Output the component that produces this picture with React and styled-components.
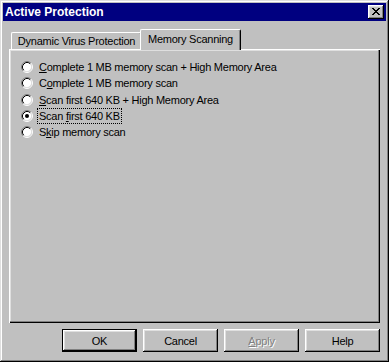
import React from "react";
import styled, { createGlobalStyle } from "styled-components";

const Global = createGlobalStyle`
  html, body { margin: 0; padding: 0; background: #c0c0c0; }
  body {
    font-family: "Liberation Sans", Arial, sans-serif;
    font-size: 11px;
    color: #000;
  }
`;

const bevelOut =
  "inset -1px -1px #000, inset 1px 1px #fff, inset -2px -2px #808080, inset 2px 2px #dfdfdf";

const Window = styled.div`
  box-sizing: border-box;
  width: 389px;
  height: 362px;
  padding: 3px;
  background: #c0c0c0;
  box-shadow: inset -1px -1px #000, inset 1px 1px #dfdfdf,
    inset -2px -2px #808080, inset 2px 2px #fff;
  display: flex;
  flex-direction: column;
`;

const TitleBar = styled.div`
  flex: none;
  height: 18px;
  background: #000080;
  color: #fff;
  display: flex;
  align-items: center;
  justify-content: space-between;
  padding: 0 2px;
`;

const Title = styled.span`
  font-weight: bold;
  font-size: 12px;
  line-height: 14px;
`;

const CloseButton = styled.div`
  box-sizing: border-box;
  width: 16px;
  height: 14px;
  background: #c0c0c0;
  box-shadow: ${bevelOut};
  display: flex;
  align-items: center;
  justify-content: center;
  padding: 0 1px 1px 0;
  svg { display: block; }
`;

const Body = styled.div`
  flex: 1;
  display: flex;
  flex-direction: column;
  padding: 8px 6px 7px;
  min-height: 0;
`;

const TabRow = styled.div`
  flex: none;
  height: 20px;
  display: flex;
  align-items: flex-end;
  padding-left: 2px;
`;

const Tab = styled.div`
  position: relative;
  z-index: ${(p) => (p.$active ? 2 : 1)};
  box-sizing: border-box;
  width: ${(p) => p.$w}px;
  height: ${(p) => (p.$active ? 21 : 17)}px;
  margin-left: ${(p) => (p.$active ? -2 : 0)}px;
  margin-bottom: ${(p) => (p.$active ? -1 : 0)}px;
  padding-top: ${(p) => (p.$active ? 2 : 1)}px;
  background: #c0c0c0;
  border-top: 1px solid #fff;
  border-left: 1px solid #fff;
  border-right: 1px solid #000;
  border-radius: 2px 2px 0 0;
  box-shadow: inset -1px 0 #808080;
  display: flex;
  justify-content: center;
  line-height: 14px;
  letter-spacing: -0.25px;
  white-space: nowrap;
`;

const Panel = styled.div`
  position: relative;
  z-index: 0;
  flex: 1;
  box-sizing: border-box;
  background: #c0c0c0;
  box-shadow: inset 1px 1px #fff, inset -1px -1px #000,
    inset -2px -2px #808080, inset 2px 2px #dfdfdf;
  padding: 10px 12px;
  display: flex;
  flex-direction: column;
`;

const Option = styled.div`
  height: 16.25px;
  display: flex;
  align-items: center;
  gap: 4px;
`;

const Label = styled.span`
  box-sizing: border-box;
  height: 16px;
  line-height: 14px;
  padding: 0 1px;
  border: 1px dotted ${(p) => (p.$focus ? "#000" : "transparent")};
  letter-spacing: -0.25px;
  white-space: nowrap;
`;

const Key = styled.span`
  text-decoration: underline;
  text-underline-offset: 1px;
`;

const ButtonRow = styled.div`
  flex: none;
  display: flex;
  justify-content: flex-end;
  gap: 6px;
  margin-top: 6px;
`;

const Button = styled.div`
  box-sizing: border-box;
  width: 75px;
  height: 23px;
  background: #c0c0c0;
  display: flex;
  align-items: center;
  justify-content: center;
  letter-spacing: -0.25px;
  line-height: 14px;
  box-shadow: ${(p) =>
    p.$default
      ? "inset 0 0 0 1px #000, inset -2px -2px #000, inset 2px 2px #fff, inset -3px -3px #808080, inset 3px 3px #dfdfdf"
      : bevelOut};
  color: ${(p) => (p.$disabled ? "#808080" : "#000")};
  text-shadow: ${(p) => (p.$disabled ? "1px 1px 0 #fff" : "none")};
`;

function CloseGlyph() {
  let d = "";
  for (let i = 0; i < 7; i++) {
    d += `M${i} ${i}h2v1h-2z`;
    d += `M${6 - i} ${i}h2v1h-2z`;
  }
  return (
    <svg width="8" height="7" viewBox="0 0 8 7" shapeRendering="crispEdges">
      <path d={d} fill="#000" />
    </svg>
  );
}

function Radio({ checked }) {
  return (
    <svg width="12" height="12" viewBox="0 0 12 12" style={{ flex: "none" }}>
      <circle cx="6" cy="6" r="4.5" fill="#fff" />
      <path d="M2.11 9.89A5.5 5.5 0 0 1 9.89 2.11" fill="none" stroke="#808080" strokeWidth="1" />
      <path d="M9.89 2.11A5.5 5.5 0 0 1 2.11 9.89" fill="none" stroke="#fff" strokeWidth="1" />
      <path d="M2.82 9.18A4.5 4.5 0 0 1 9.18 2.82" fill="none" stroke="#000" strokeWidth="1" />
      <path d="M9.18 2.82A4.5 4.5 0 0 1 2.82 9.18" fill="none" stroke="#dfdfdf" strokeWidth="1" />
      {checked && <circle cx="6" cy="6" r="2" fill="#000" />}
    </svg>
  );
}

const options = [
  { pre: "", key: "C", post: "omplete 1 MB memory scan + High Memory Area" },
  { pre: "C", key: "o", post: "mplete 1 MB memory scan" },
  { pre: "", key: "S", post: "can first 640 KB + High Memory Area" },
  { pre: "Scan ", key: "f", post: "irst 640 KB", checked: true },
  { pre: "S", key: "k", post: "ip memory scan" },
];

export default function App() {
  return (
    <>
      <Global />
      <Window>
        <TitleBar>
          <Title>Active Protection</Title>
          <CloseButton>
            <CloseGlyph />
          </CloseButton>
        </TitleBar>
        <Body>
          <TabRow>
            <Tab $w={131}>Dynamic Virus Protection</Tab>
            <Tab $w={101} $active>
              Memory Scanning
            </Tab>
          </TabRow>
          <Panel>
            {options.map((o, i) => (
              <Option key={i}>
                <Radio checked={o.checked} />
                <Label $focus={o.checked}>
                  {o.pre}
                  <Key>{o.key}</Key>
                  {o.post}
                </Label>
              </Option>
            ))}
          </Panel>
          <ButtonRow>
            <Button $default>OK</Button>
            <Button>Cancel</Button>
            <Button $disabled>
              <Key>A</Key>pply
            </Button>
            <Button>Help</Button>
          </ButtonRow>
        </Body>
      </Window>
    </>
  );
}
